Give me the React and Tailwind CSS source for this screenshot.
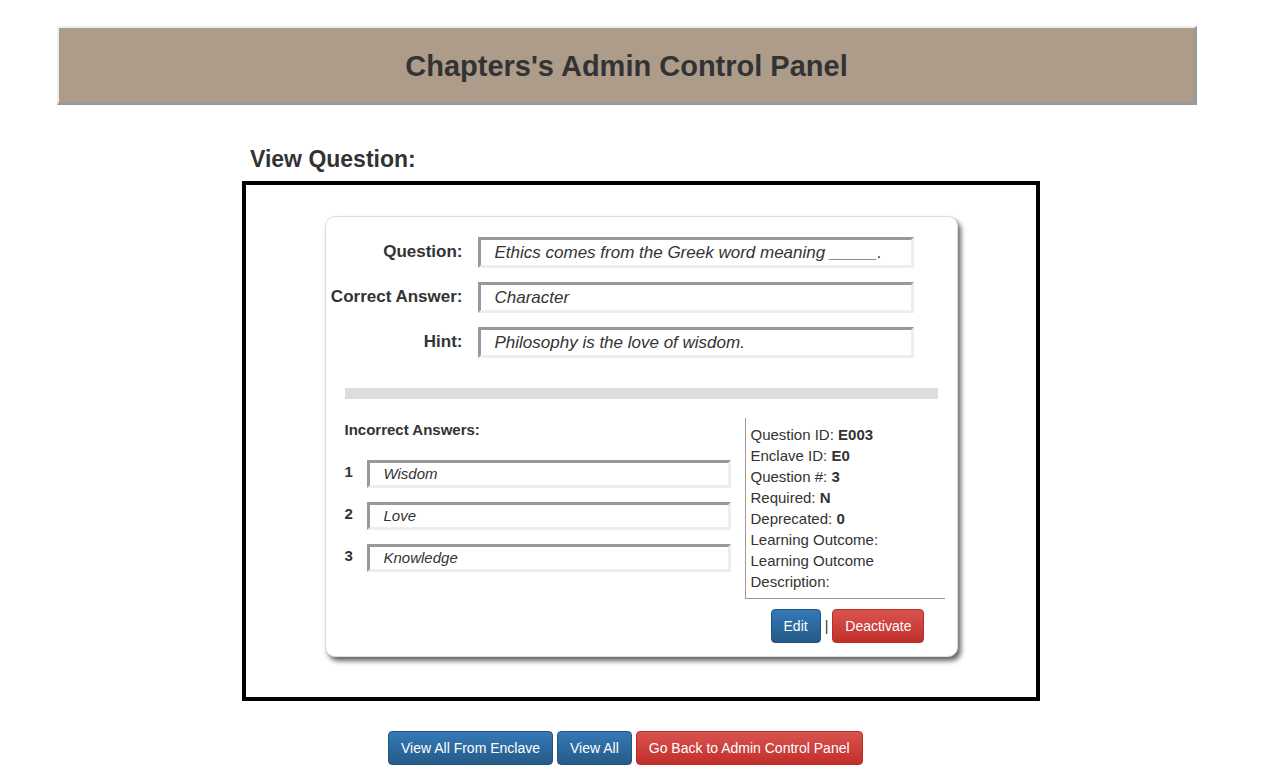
function Field({ label, value }) {
  return (
    <div className="flex items-start">
      <label className="w-[148px] pr-[15px] pt-[2px] text-right text-[17px] font-bold text-[#333] whitespace-nowrap">
        {label}
      </label>
      <div className="h-[31px] w-[436px] border-[3px] border-t-[#999] border-l-[#999] border-b-[#eee] border-r-[#eee] bg-white pl-[14px] text-[17px] leading-[25px] italic text-[#333]">
        {value}
      </div>
    </div>
  );
}

function Wrong({ n, value }) {
  return (
    <div className="flex items-start">
      <span className="w-[22px] pt-[1px] text-[15px] font-bold text-[#333]">{n}</span>
      <div className="h-[28px] w-[364px] border-[3px] border-t-[#999] border-l-[#999] border-b-[#eee] border-r-[#eee] bg-white pl-[14px] text-[15px] leading-[22px] italic text-[#333]">
        {value}
      </div>
    </div>
  );
}

const btnBlue =
  "h-[34px] rounded-[4px] border border-[#245580] bg-gradient-to-b from-[#337ab7] to-[#265a88] px-[12px] text-[14px] text-white";
const btnRed =
  "h-[34px] rounded-[4px] border border-[#b92c28] bg-gradient-to-b from-[#d9534f] to-[#c12e2a] px-[12px] text-[14px] text-white";

export default function App() {
  const info = [
    ["Question ID: ", "E003"],
    ["Enclave ID: ", "E0"],
    ["Question #: ", "3"],
    ["Required: ", "N"],
    ["Deprecated: ", "0"],
  ];

  return (
    <div className="min-h-[778px] bg-white pt-[26px] font-['Liberation_Sans',Arial,sans-serif] text-[#333]">
      {/* header */}
      <div className="ml-[57px] flex h-[79px] w-[1140px] items-center justify-center border-t-2 border-l-2 border-b-[3px] border-r-[3px] border-t-[#eee] border-l-[#eee] border-b-[#999] border-r-[#999] bg-[#ad9c8a] pt-[3px]">
        <h1 className="text-[29px] font-bold text-[#333]">Chapters's Admin Control Panel</h1>
      </div>

      <div className="mx-auto mt-[42px] w-[798px]">
        <h2 className="pl-[8px] text-[23px] font-bold leading-[24px] text-[#333]">View Question:</h2>

        <div className="mt-[10px] border-4 border-black pt-[31px] pb-[40px]">
          <div className="mx-auto w-[633px] rounded-[10px] border border-[#ddd] bg-white px-[4px] pt-[20px] pb-[13px] shadow-[3px_4px_5px_rgba(0,0,0,0.6)]">
            <div className="flex flex-col gap-[14px]">
              <Field label="Question:" value="Ethics comes from the Greek word meaning _____." />
              <Field label="Correct Answer:" value="Character" />
              <Field label="Hint:" value="Philosophy is the love of wisdom." />
            </div>

            <div className="mx-[15px] mt-[30px] h-[11px] bg-[#ddd]" />

            <div className="mt-[19px] flex pl-[15px]">
              <div className="w-[400px]">
                <div className="pt-[4px] text-[15px] font-bold leading-[16px]">Incorrect Answers:</div>
                <div className="mt-[22px] flex flex-col gap-[14px]">
                  <Wrong n="1" value="Wisdom" />
                  <Wrong n="2" value="Love" />
                  <Wrong n="3" value="Knowledge" />
                </div>
              </div>
              <div className="w-[200px]">
                <div className="border-l border-b border-[#999] pt-[6px] pb-[6px] pl-[5px] text-[15px] leading-[21px]">
                  {info.map(([k, v]) => (
                    <div key={k}>
                      {k}
                      <b>{v}</b>
                    </div>
                  ))}
                  <div>Learning Outcome:</div>
                  <div>Learning Outcome</div>
                  <div>Description:</div>
                </div>
                <div className="mt-[10px] flex items-center justify-center gap-[4px] pl-[6px]">
                  <button className={btnBlue}>Edit</button>
                  <span className="text-[14px]">|</span>
                  <button className={btnRed}>Deactivate</button>
                </div>
              </div>
            </div>
          </div>
        </div>
      </div>

      <div className="mt-[30px] ml-[388px] flex gap-[4px] pb-[14px]">
        <button className={btnBlue}>View All From Enclave</button>
        <button className={btnBlue}>View All</button>
        <button className={btnRed}>Go Back to Admin Control Panel</button>
      </div>
    </div>
  );
}
